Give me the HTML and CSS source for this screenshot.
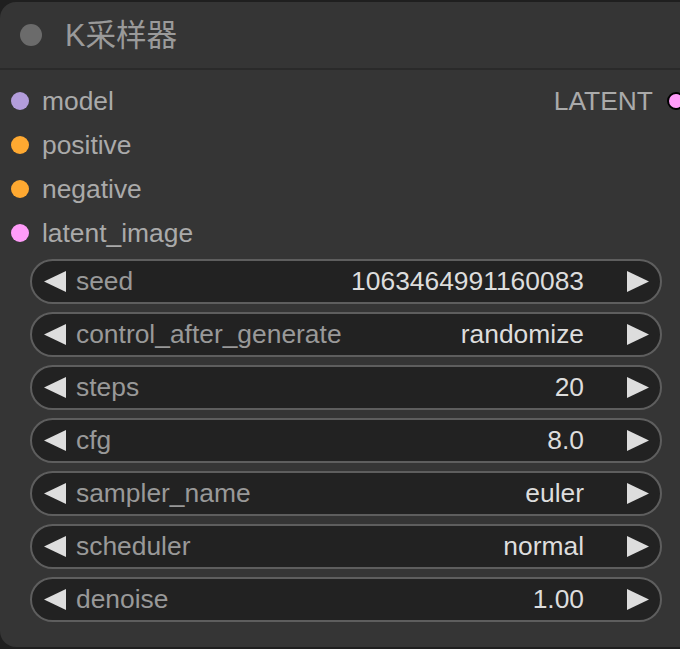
FILE: index.html
```html
<!DOCTYPE html>
<html>
<head>
<meta charset="utf-8">
<link rel="stylesheet" href="styles.css">
</head>
<body>
<div class="node">
  <div class="title">
    <span class="title-dot"></span>
    <span class="title-text">K采样器</span>
  </div>
  <div class="slots">
    <div class="slot-row">
      <div class="slot in"><span class="dot model"></span><span class="slot-label">model</span></div>
      <div class="slot out"><span class="slot-label">LATENT</span><span class="dot latent out-dot"></span></div>
    </div>
    <div class="slot-row">
      <div class="slot in"><span class="dot cond"></span><span class="slot-label">positive</span></div>
    </div>
    <div class="slot-row">
      <div class="slot in"><span class="dot cond"></span><span class="slot-label">negative</span></div>
    </div>
    <div class="slot-row">
      <div class="slot in"><span class="dot latent"></span><span class="slot-label">latent_image</span></div>
    </div>
  </div>
  <div class="widgets">
    <div class="widget">
      <svg class="arrow" width="22" height="21" viewBox="0 0 22 21"><polygon points="22,0 22,21 0,10.5"/></svg>
      <span class="w-label">seed</span>
      <span class="w-value">1063464991160083</span>
      <svg class="arrow" width="22" height="21" viewBox="0 0 22 21"><polygon points="0,0 0,21 22,10.5"/></svg>
    </div>
    <div class="widget">
      <svg class="arrow" width="22" height="21" viewBox="0 0 22 21"><polygon points="22,0 22,21 0,10.5"/></svg>
      <span class="w-label">control_after_generate</span>
      <span class="w-value">randomize</span>
      <svg class="arrow" width="22" height="21" viewBox="0 0 22 21"><polygon points="0,0 0,21 22,10.5"/></svg>
    </div>
    <div class="widget">
      <svg class="arrow" width="22" height="21" viewBox="0 0 22 21"><polygon points="22,0 22,21 0,10.5"/></svg>
      <span class="w-label">steps</span>
      <span class="w-value">20</span>
      <svg class="arrow" width="22" height="21" viewBox="0 0 22 21"><polygon points="0,0 0,21 22,10.5"/></svg>
    </div>
    <div class="widget">
      <svg class="arrow" width="22" height="21" viewBox="0 0 22 21"><polygon points="22,0 22,21 0,10.5"/></svg>
      <span class="w-label">cfg</span>
      <span class="w-value">8.0</span>
      <svg class="arrow" width="22" height="21" viewBox="0 0 22 21"><polygon points="0,0 0,21 22,10.5"/></svg>
    </div>
    <div class="widget">
      <svg class="arrow" width="22" height="21" viewBox="0 0 22 21"><polygon points="22,0 22,21 0,10.5"/></svg>
      <span class="w-label">sampler_name</span>
      <span class="w-value">euler</span>
      <svg class="arrow" width="22" height="21" viewBox="0 0 22 21"><polygon points="0,0 0,21 22,10.5"/></svg>
    </div>
    <div class="widget">
      <svg class="arrow" width="22" height="21" viewBox="0 0 22 21"><polygon points="22,0 22,21 0,10.5"/></svg>
      <span class="w-label">scheduler</span>
      <span class="w-value">normal</span>
      <svg class="arrow" width="22" height="21" viewBox="0 0 22 21"><polygon points="0,0 0,21 22,10.5"/></svg>
    </div>
    <div class="widget">
      <svg class="arrow" width="22" height="21" viewBox="0 0 22 21"><polygon points="22,0 22,21 0,10.5"/></svg>
      <span class="w-label">denoise</span>
      <span class="w-value">1.00</span>
      <svg class="arrow" width="22" height="21" viewBox="0 0 22 21"><polygon points="0,0 0,21 22,10.5"/></svg>
    </div>
  </div>
</div>
</body>
</html>
```
FILE: styles.css
```css
html, body {
  margin: 0;
  padding: 0;
  width: 680px;
  height: 649px;
  overflow: hidden;
  background: #1f1f1f;
  font-family: "Liberation Sans", Arial, "Noto Sans CJK SC", sans-serif;
}

.node {
  margin-top: 2px;
  width: 680px;
  height: 645px;
  background: #353535;
  border-radius: 16px 0 0 16px;
  box-sizing: border-box;
  overflow: hidden;
}

.title {
  height: 66px;
  border-bottom: 2px solid #2a2a2a;
  display: flex;
  align-items: center;
  padding-left: 20px;
  gap: 23px;
}

.title-dot {
  width: 22px;
  height: 22px;
  border-radius: 50%;
  background: #6b6b6b;
}

.title-text {
  font-size: 30.6px;
  color: #9a9a9a;
  line-height: 1;
  margin-top: 0;
}

.slots {
  padding-top: 9px;
}

.slot-row {
  height: 44px;
  display: flex;
  align-items: center;
  justify-content: space-between;
  padding-left: 11px;
}

.slot {
  display: flex;
  align-items: center;
  gap: 13px;
}

.slot.out {
  gap: 14px;
  margin-right: -5px;
}

.dot {
  width: 18px;
  height: 18px;
  border-radius: 50%;
  box-sizing: border-box;
  flex: none;
}

.dot.model { background: #b39ddb; }
.dot.cond { background: #ffa931; }
.dot.latent { background: #ff9cf9; }
.dot.out-dot { border: 2px solid #000; }

.slot-label {
  font-size: 26.4px;
  color: #aaaaaa;
  line-height: 1;
}

.widgets {
  padding-top: 4px;
  display: flex;
  flex-direction: column;
  gap: 8px;
}

.widget {
  margin-left: 30px;
  width: 632px;
  height: 45px;
  box-sizing: border-box;
  border: 2px solid #5e5e5e;
  border-radius: 23px;
  background: #222222;
  display: flex;
  align-items: center;
  padding-left: 12px;
  padding-right: 11px;
}

.arrow {
  fill: #dddddd;
  flex: none;
}

.w-label {
  margin-left: 10px;
  font-size: 26.4px;
  color: #999999;
  flex: 1;
  line-height: 1;
}

.w-value {
  font-size: 26.4px;
  color: #dddddd;
  margin-right: 43px;
  line-height: 1;
}
```
